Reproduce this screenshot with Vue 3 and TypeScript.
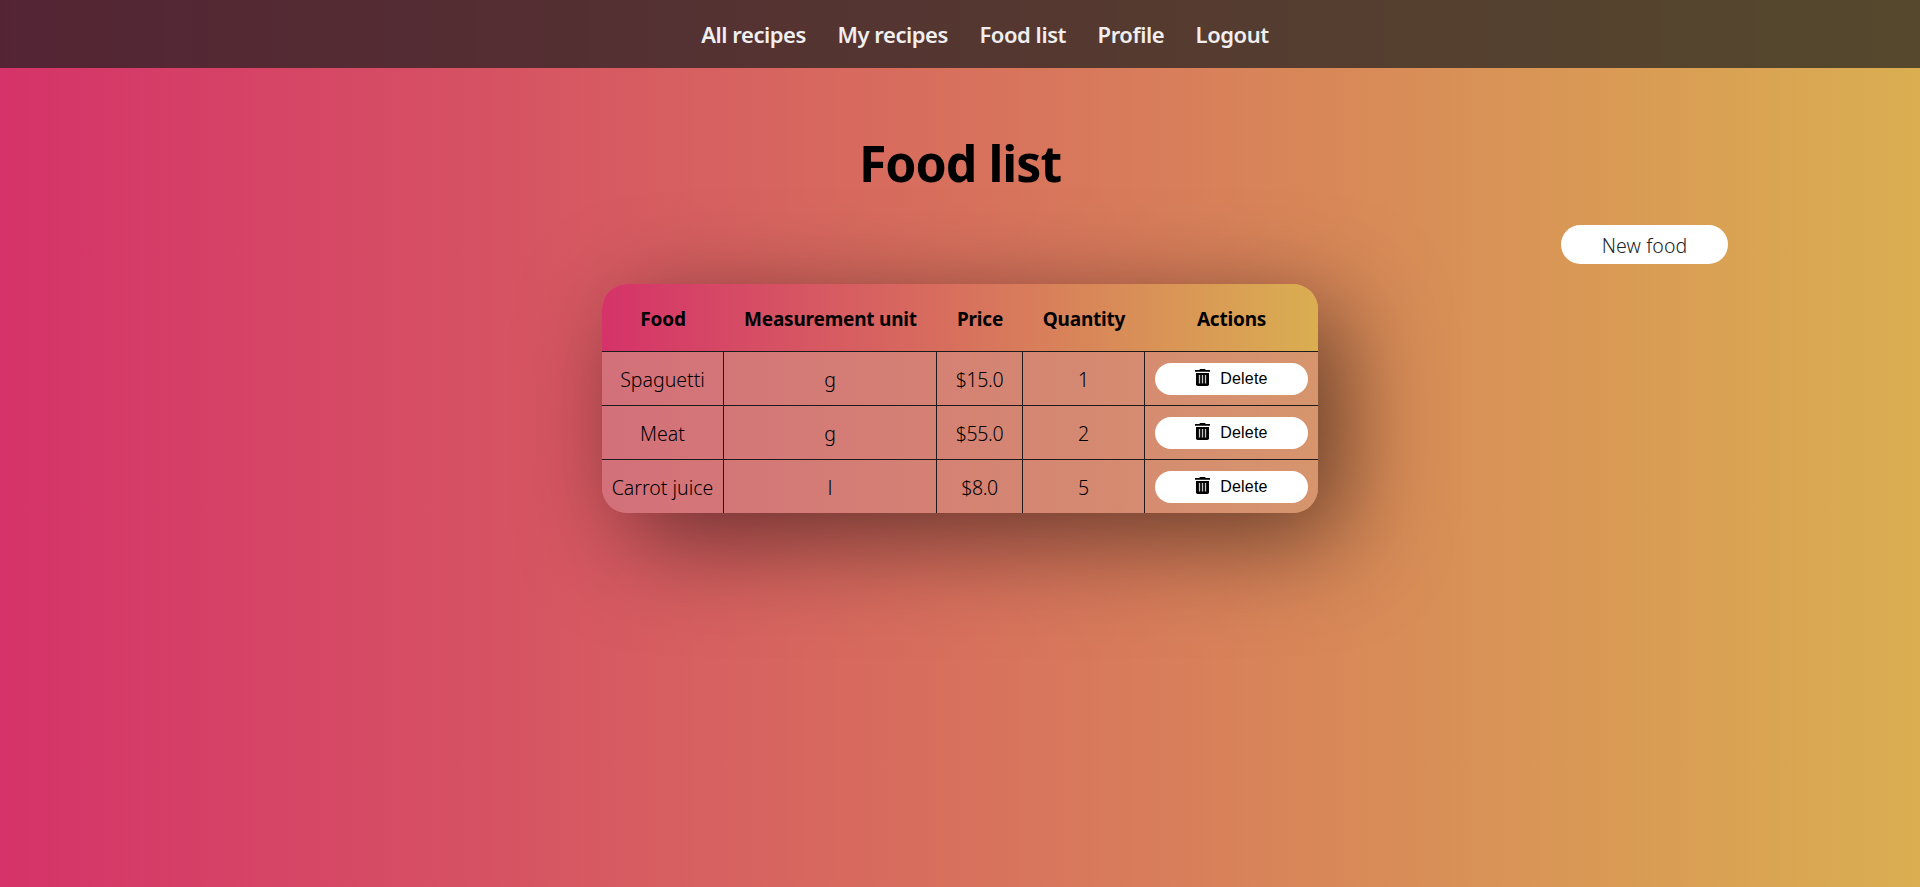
<script setup lang="ts">
interface Food {
  name: string
  unit: string
  price: string
  quantity: number
}

const links: string[] = ['All recipes', 'My recipes', 'Food list', 'Profile', 'Logout']

const columns: string[] = ['Food', 'Measurement unit', 'Price', 'Quantity', 'Actions']

const foods: Food[] = [
  { name: 'Spaguetti', unit: 'g', price: '$15.0', quantity: 1 },
  { name: 'Meat', unit: 'g', price: '$55.0', quantity: 2 },
  { name: 'Carrot juice', unit: 'l', price: '$8.0', quantity: 5 },
]
</script>

<template>
  <div class="page">
    <nav class="nav">
      <a v-for="link in links" :key="link" class="link">{{ link }}</a>
    </nav>
    <main class="main">
      <h1 class="title">Food list</h1>
      <div class="toolbar">
        <button class="new-food" type="button">New food</button>
      </div>
      <div class="table">
        <div class="row head">
          <div v-for="column in columns" :key="column" class="cell">{{ column }}</div>
        </div>
        <div v-for="food in foods" :key="food.name" class="row item">
          <div class="cell">{{ food.name }}</div>
          <div class="cell">{{ food.unit }}</div>
          <div class="cell price">{{ food.price }}</div>
          <div class="cell">{{ food.quantity }}</div>
          <div class="cell action">
            <button class="delete" type="button">
              <svg class="icon" width="15" height="17" viewBox="0 0 15 17">
                <path d="M5 0h5l.7 1H15v1.700H0V1h4.300z" fill="#000" />
                <path d="M1 4h13v11.200q0 1.800-1.800 1.800H2.800Q1 17 1 15.200z" fill="#000" />
                <path d="M4.500 6v8.500M7.500 6v8.500M10.500 6v8.500" stroke="#c4c4c4" stroke-width="1.300" />
              </svg>
              <span>Delete</span>
            </button>
          </div>
        </div>
      </div>
    </main>
  </div>
</template>

<style>
body {
  margin: 0;
}
</style>

<style scoped>
.page {
  height: 887px;
  overflow: hidden;
  background: linear-gradient(to right, #d53369, #daae51);
  font-family: 'Noto Sans', 'Open Sans', sans-serif;
  color: #000;
}
.nav {
  box-sizing: border-box;
  height: 68px;
  padding: 0 0 0 50px;
  display: flex;
  justify-content: center;
  align-items: center;
  gap: 31.5px;
  background: rgba(31, 31, 31, 0.71);
}
.link {
  color: #f0eeee;
  font-size: 22px;
  font-weight: 600;
  letter-spacing: -0.45px;
  white-space: nowrap;
}
.main {
  display: flex;
  flex-direction: column;
  align-items: center;
}
.title {
  margin: 61px 0 0;
  height: 68px;
  line-height: 69px;
  font-size: 50px;
  font-weight: 700;
  letter-spacing: -1px;
}
.toolbar {
  align-self: stretch;
  display: flex;
  justify-content: flex-end;
  margin-top: 28px;
  padding-right: 192px;
}
.new-food {
  width: 167px;
  height: 39px;
  padding: 2px 0 0;
  border: 0;
  border-radius: 20px;
  background: #fff;
  color: #212529;
  font: 350 19.5px 'Noto Sans', sans-serif;
  letter-spacing: 0.1px;
}
.table {
  width: 716px;
  margin-top: 20px;
  border-radius: 25px;
  overflow: hidden;
  box-shadow: 25px 25px 100px rgba(0, 0, 0, 0.53);
  background: linear-gradient(to right, #d3707a, #d6956d);
}
.row {
  display: grid;
  grid-template-columns: 122px 213px 86px 122px 173px;
}
.head {
  height: 67px;
  background: linear-gradient(to right, #d53369, #daae51);
  font-size: 19px;
  font-weight: 700;
  letter-spacing: -0.2px;
}
.item {
  box-sizing: border-box;
  height: 54px;
  border-top: 1px solid #1c1a1a;
  font-size: 19.5px;
  font-weight: 350;
}
.cell {
  display: flex;
  justify-content: center;
  align-items: center;
  white-space: nowrap;
}
.head .cell {
  padding-top: 2px;
}
.item .cell {
  padding-top: 2px;
}
.item .cell:not(:last-child) {
  border-right: 1px solid #1c1a1a;
}
.item .price {
  letter-spacing: -0.4px;
}
.item .action {
  padding-top: 0;
  align-items: flex-start;
}
.delete {
  display: flex;
  align-items: center;
  justify-content: center;
  gap: 10px;
  width: 153px;
  height: 32px;
  margin-top: 11px;
  padding: 0 0 1px 0;
  border: 0;
  border-radius: 16px;
  background: #fff;
  color: #000;
  font: 16px 'Liberation Sans', Arial, sans-serif;
  letter-spacing: 0.2px;
}
.icon {
  position: relative;
  top: -1px;
}
</style>
